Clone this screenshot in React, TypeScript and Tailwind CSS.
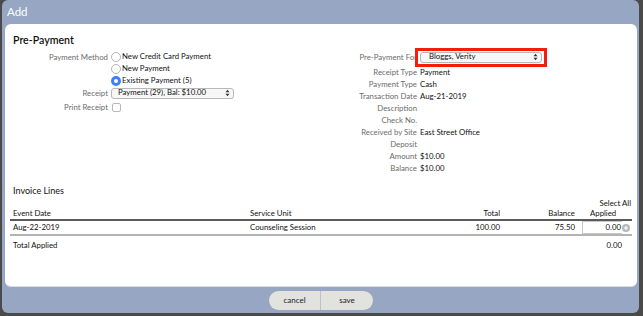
import React from 'react';

const font = { fontFamily: 'Lato, "Open Sans", sans-serif' };

const Radio = ({ checked }: { checked?: boolean }) =>
  checked ? (
    <span className="w-[10px] h-[10px] rounded-full bg-[#3b82f6] flex items-center justify-center shrink-0">
      <span className="w-[4px] h-[4px] rounded-full bg-white" />
    </span>
  ) : (
    <span className="w-[10px] h-[10px] rounded-full border border-[#b5b5b5] bg-white shrink-0" />
  );

const Arrows = () => (
  <svg width="5" height="8" viewBox="0 0 5 8" className="shrink-0">
    <path d="M0.5 3.2 L2.5 0.8 L4.5 3.2 Z M0.5 4.8 L2.5 7.2 L4.5 4.8 Z" fill="#333" />
  </svg>
);

const RightRow = ({ label, value }: { label: string; value?: string }) => (
  <>
    <div className="text-right text-[#6b6b6b] h-[12px] leading-[12px]">{label}</div>
    <div className="text-[#111] h-[12px] leading-[12px]">{value}</div>
  </>
);

export default function App() {
  return (
    <div className="w-[643px] h-[316px] bg-[#4a4a4a] pl-[2px] pr-[4px] pb-[3px] overflow-hidden" style={font}>
      <div className="h-full bg-[#97a6c3] rounded-[6px] flex flex-col pl-[3px] pr-[2px]">
        <div className="h-[24px] flex items-center pl-[2px] text-white text-[11.5px]">Add</div>

        <div className="h-[263px] bg-white rounded-[6px] border-b border-[#d8dbe2] pt-[8px] px-[5px] text-[7.8px]">
          <div className="pl-[3px] h-[16px] leading-[16px] text-[10.6px] font-semibold text-[#111]">Pre-Payment</div>

          <div className="flex">
            {/* left side */}
            <div className="w-[313px] pt-[3px] pl-[3px] grid grid-cols-[95px_1fr] gap-x-[3px] content-start">
              <div className="text-right text-[#6b6b6b] h-[12px] leading-[12px]">Payment Method</div>
              <div className="flex flex-col">
                <div className="flex items-center gap-[1px] h-[12px] text-[#111]"><Radio />New Credit Card Payment</div>
                <div className="flex items-center gap-[1px] h-[12px] text-[#111]"><Radio />New Payment</div>
                <div className="flex items-center gap-[1px] h-[12px] text-[#111]"><Radio checked />Existing Payment (5)</div>
              </div>
              <div className="text-right text-[#6b6b6b] h-[12px] leading-[12px]">Receipt</div>
              <div className="h-[12px] flex items-center">
                <div className="w-[123px] h-[11px] border border-[#b8b8b8] rounded-[3px] bg-[#f7f7f7] flex items-center justify-between pl-[6px] pr-[3px] text-[#111]">
                  <span>Payment (29), Bal: $10.00</span>
                  <Arrows />
                </div>
              </div>
              <div className="text-right text-[#6b6b6b] h-[14px] leading-[14px] mt-[1px]">Print Receipt</div>
              <div className="h-[14px] flex items-center mt-[1px]">
                <span className="w-[9px] h-[9px] border border-[#b8b8b8] rounded-[2px] bg-white ml-[1px]" />
              </div>
            </div>

            {/* right side */}
            <div className="grid grid-cols-[94px_1fr] gap-x-[3px] content-start">
              <div className="text-right text-[#6b6b6b] h-[18px] leading-[18px]">Pre-Payment For</div>
              <div className="h-[18px] flex items-center relative">
                <div className="w-[122px] h-[11px] border border-[#b8b8b8] rounded-[3px] bg-[#f7f7f7] flex items-center justify-between pl-[8px] pr-[3px] text-[#111]">
                  <span>Bloggs, Verity</span>
                  <Arrows />
                </div>
                <div className="absolute left-[-5px] top-[0px] w-[132px] h-[19px] border-[3px] border-[#f21d0e]" />
              </div>
              <RightRow label="Receipt Type" value="Payment" />
              <RightRow label="Payment Type" value="Cash" />
              <RightRow label="Transaction Date" value="Aug-21-2019" />
              <RightRow label="Description" />
              <RightRow label="Check No." />
              <RightRow label="Received by Site" value="East Street Office" />
              <RightRow label="Deposit" />
              <RightRow label="Amount" value="$10.00" />
              <RightRow label="Balance" value="$10.00" />
            </div>
          </div>

          <div className="pl-[3px] mt-[10px] h-[14px] leading-[14px] text-[9px] text-[#111]">Invoice Lines</div>

          <div className="text-[#111]">
            <div className="flex justify-end pr-[1px] h-[11px] leading-[11px]">Select All</div>
            <div className="flex items-end h-[12px] leading-[12px] border-b-[2px] border-[#5a5a5a]">
              <div className="w-[240px] pl-[3px]">Event Date</div>
              <div className="flex-1">Service Unit</div>
              <div className="w-[60px] text-right">Total</div>
              <div className="w-[75px] text-right">Balance</div>
              <div className="w-[57px] pl-[15px]">Applied</div>
            </div>
            <div className="flex items-center h-[15px] border-b-[2px] border-[#b3b3b3]">
              <div className="w-[240px] pl-[3px]">Aug-22-2019</div>
              <div className="flex-1">Counseling Session</div>
              <div className="w-[60px] text-right">100.00</div>
              <div className="w-[75px] text-right">75.50</div>
              <div className="w-[57px] pl-[7px] flex items-center">
                <div className="w-[40px] h-[13px] border border-[#c8c8c8] border-r-0 text-right pr-[1px] leading-[11px]">0.00</div>
                <svg width="8" height="8" viewBox="0 0 8 8">
                  <circle cx="4" cy="4" r="4" fill="#b9b9b9" />
                  <path d="M4 2 V6 M2 4 H6" stroke="#fff" strokeWidth="1.2" />
                </svg>
              </div>
            </div>
            <div className="flex items-center h-[16px] mt-[2px]">
              <div className="flex-1 pl-[3px]">Total Applied</div>
              <div className="w-[57px] text-right pr-[10px]">0.00</div>
            </div>
          </div>
        </div>

        <div className="flex-1 flex items-center justify-center">
          <div className="flex h-[19px] rounded-full overflow-hidden bg-[#e2e2de] text-[8px] text-[#222]">
            <div className="w-[52px] flex items-center justify-center border-r border-[#b7c2d6]">cancel</div>
            <div className="w-[52px] flex items-center justify-center">save</div>
          </div>
        </div>
      </div>
    </div>
  );
}
